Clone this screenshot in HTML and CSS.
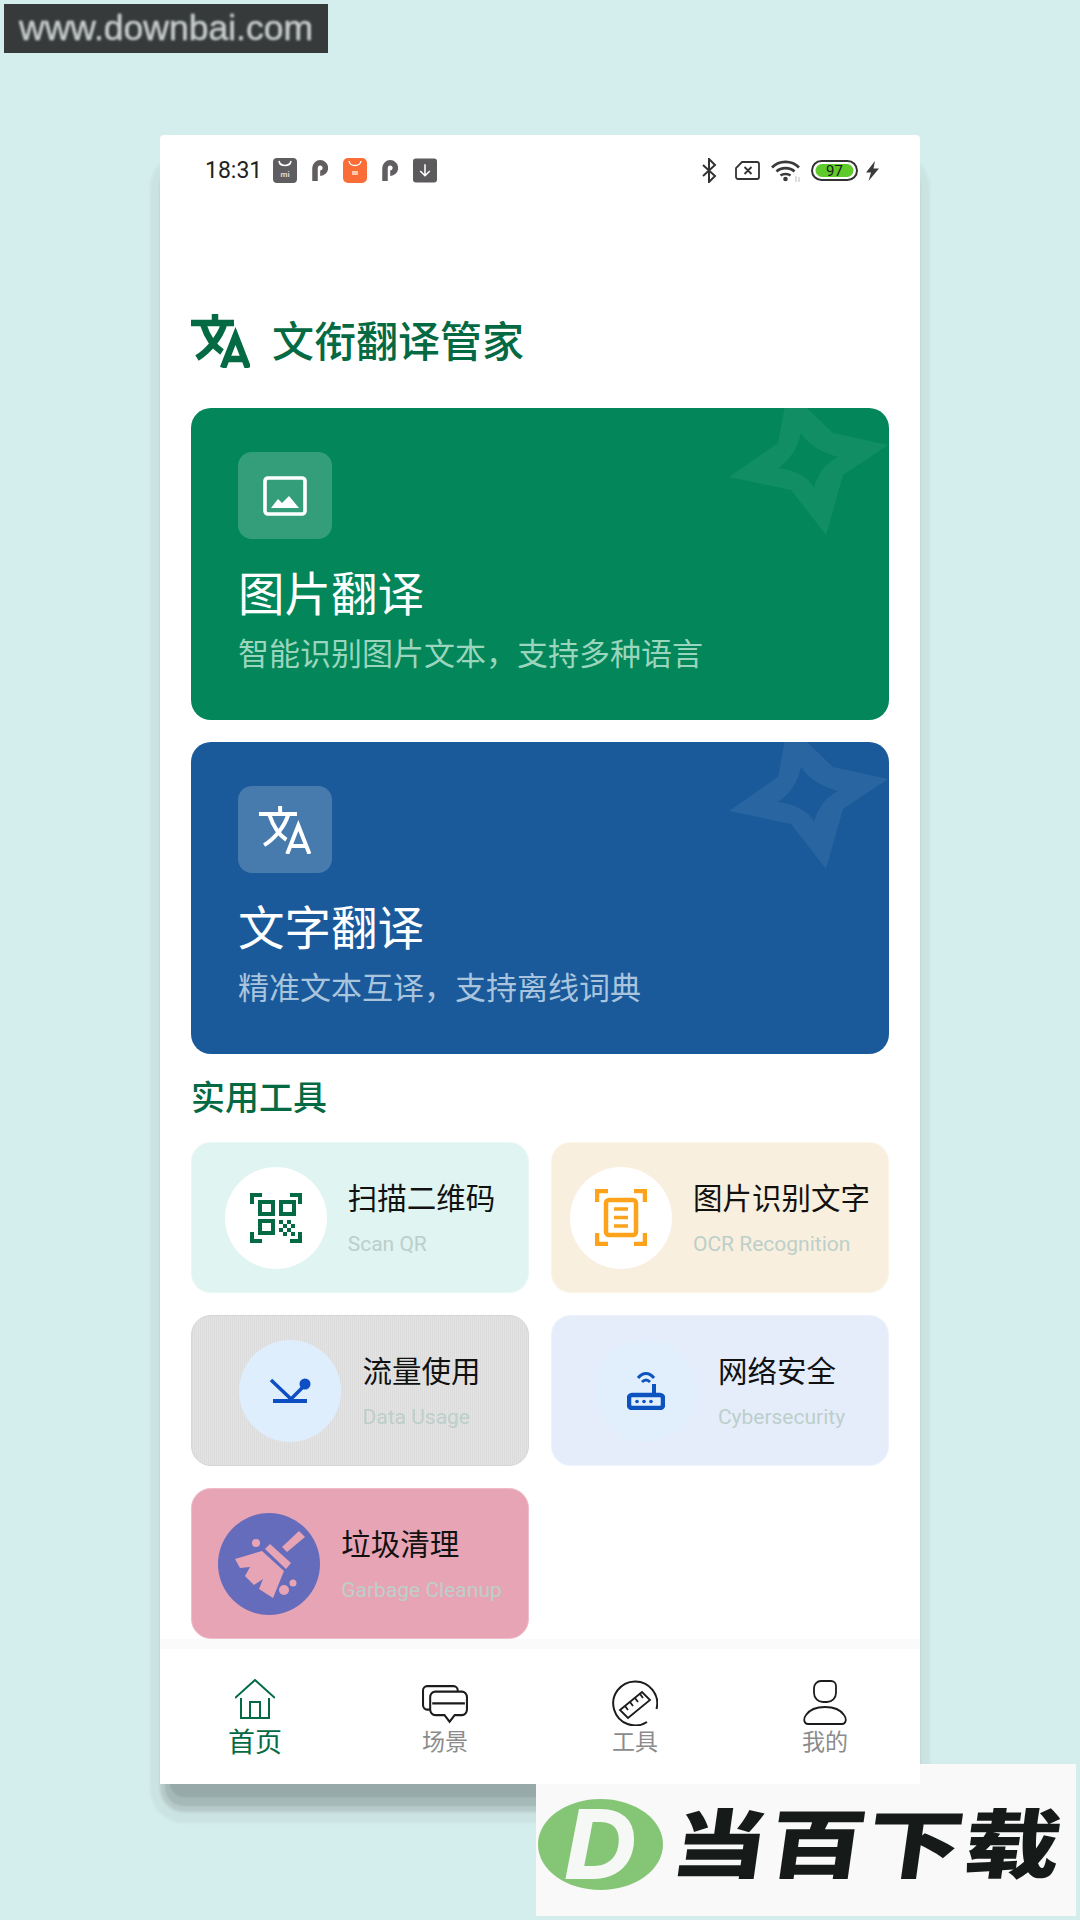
FILE: index.html
```html
<!DOCTYPE html>
<html lang="zh">
<head>
<meta charset="utf-8">
<title>文衔翻译管家</title>
<link rel="stylesheet" href="styles.css">
</head>
<body>
<div class="watermark"><span class="watermark-text">www.downbai.com</span></div>

<div class="stage">
  <div class="phone-frame">
  <main class="phone">
    <div class="status">
      <div class="status-left">
        <span class="time">18:31</span>
        <svg class="si" viewBox="0 0 24 25"><rect width="24" height="25" rx="4" fill="#5f5d5f"/><path d="M6 3c1 6 11 6 12 0" fill="none" stroke="#fff" stroke-width="1.6"/><text x="12" y="19" text-anchor="middle" class="si-mi">mi</text></svg>
        <svg class="si-p" viewBox="0 0 16 21"><path d="M3 21V8a5.2 5.2 0 1 1 5.2 5.2" fill="none" stroke="#615d60" stroke-width="5.5"/></svg>
        <svg class="si" viewBox="0 0 24 25"><rect width="24" height="25" rx="5" fill="#fb6d37"/><path d="M6 3c1 6 11 6 12 0" fill="none" stroke="#fff" stroke-width="1.4"/><rect x="9" y="13" width="6" height="4" fill="#fcc6ae"/></svg>
        <svg class="si-p" viewBox="0 0 16 21"><path d="M3 21V8a5.2 5.2 0 1 1 5.2 5.2" fill="none" stroke="#615d60" stroke-width="5.5"/></svg>
        <svg class="si" viewBox="0 0 25 25"><rect width="25" height="25" rx="3" fill="#5c5a5c"/><path d="M12.500 6v12M7.500 13l5 5 5-5" fill="none" stroke="#fff" stroke-width="1.600"/></svg>
      </div>
      <div class="status-right">
        <svg class="sr-bt" viewBox="0 0 15 25"><path d="M1 7l12 11-6 6V1l6 6L1 18" fill="none" stroke="#333" stroke-width="2"/></svg>
        <svg class="sr-sim" viewBox="0 0 25 19"><path d="M7 1H22a2 2 0 0 1 2 2V16a2 2 0 0 1-2 2H3a2 2 0 0 1-2-2V7ZM9.500 6l7 7M16.500 6l-7 7" fill="none" stroke="#333" stroke-width="1.800"/></svg>
        <svg class="sr-wifi" viewBox="0 0 29 23"><path d="M1 8.500C8 1 21 1 28 8.500M5.500 12.500C10 8 19 8 23.500 12.500M9.500 16.500c2.500-2 7.500-2 10 0" fill="none" stroke="#3a3a3a" stroke-width="2.600"/><circle cx="14.500" cy="20" r="2.300" fill="#3a3a3a"/><path d="M25 17v6M28 18v5" stroke="#bbb" stroke-width="1"/></svg>
        <svg class="sr-bat" viewBox="0 0 47 21"><rect x="1" y="1" width="45" height="19" rx="9.500" fill="#fff" stroke="#333" stroke-width="2"/><rect x="4.500" y="4" width="38" height="13" rx="6.500" fill="#5fcb2a"/><text x="23.500" y="16" text-anchor="middle" class="sr-bat-t">97</text></svg>
        <svg class="sr-bolt" viewBox="0 0 13 20"><path d="M9 0 0 11.500H5L2.500 20 13 7.500H7.500Z" fill="#3b3b3b"/></svg>
      </div>
    </div>

    <header class="app-head">
      <svg class="app-logo" viewBox="0 0 59 54"><use href="#i-translate"/></svg>
      <h1 class="app-title">文衔翻译管家</h1>
    </header>

    <section class="hero hero-green">
      <svg class="hero-star" viewBox="0 0 160 150"><path fill-rule="evenodd" d="M1 87 50 53 60 0 105 43 160 55 115 85 98 145 63 100ZM73 43Q84 60 110 67 92 76 86 98 78 82 50 78 68 66 73 43Z"/></svg>
      <div class="hero-icon">
        <svg class="ic-img" viewBox="0 0 44 40"><rect x="2" y="2" width="40" height="36" rx="3" fill="none" stroke="#fff" stroke-width="3.600"/><path d="M8 32 15 23 19 27 26 20 36 32Z" fill="#fff"/></svg>
      </div>
      <h2 class="hero-title">图片翻译</h2>
      <p class="hero-sub sub-green">智能识别图片文本，支持多种语言</p>
    </section>

    <section class="hero hero-blue">
      <svg class="hero-star" viewBox="0 0 160 150"><path fill-rule="evenodd" d="M1 87 50 53 60 0 105 43 160 55 115 85 98 145 63 100ZM73 43Q84 60 110 67 92 76 86 98 78 82 50 78 68 66 73 43Z"/></svg>
      <div class="hero-icon">
        <svg class="ic-tr" viewBox="0 0 59 54"><use href="#i-translate"/></svg>
      </div>
      <h2 class="hero-title">文字翻译</h2>
      <p class="hero-sub sub-blue">精准文本互译，支持离线词典</p>
    </section>

    <h3 class="section-title">实用工具</h3>

    <div class="tools">
      <a class="tool t-mint">
        <span class="disc disc-white">
          <svg class="ic-qr" viewBox="0 0 52 50">
            <g fill="none" stroke="#046a43" stroke-width="4"><path d="M2 11V2H12M40 2H50V11M2 39V48H12M40 48H50V39"/><rect x="10" y="9" width="13" height="12"/><rect x="31" y="9" width="13" height="12"/><rect x="10" y="28" width="13" height="12"/></g>
            <g fill="#046a43"><rect x="29" y="27" width="4" height="4"/><rect x="37" y="27" width="4" height="4"/><rect x="33" y="31" width="4" height="4"/><rect x="41" y="31" width="4" height="4"/><rect x="29" y="35" width="4" height="4"/><rect x="37" y="35" width="4" height="4"/><rect x="33" y="39" width="4" height="4"/><rect x="41" y="39" width="4" height="4"/></g>
          </svg>
        </span>
        <span class="tool-text"><b class="tool-name">扫描二维码</b><i class="tool-en">Scan QR</i></span>
      </a>
      <a class="tool t-cream">
        <span class="disc disc-white">
          <svg class="ic-ocr" viewBox="0 0 52 57">
            <g fill="none" stroke="#fca31b" stroke-width="4.500"><path d="M2 13V2H13M39 2H50V13M2 44V55H13M39 55H50V44"/><rect x="11" y="11" width="30" height="35" rx="3"/></g>
            <path d="M19 20H33M19 28.500H33M19 37H33" stroke="#fca31b" stroke-width="3.500"/>
          </svg>
        </span>
        <span class="tool-text"><b class="tool-name">图片识别文字</b><i class="tool-en">OCR Recognition</i></span>
      </a>
      <a class="tool t-grey">
        <span class="disc disc-sky">
          <svg class="ic-data" viewBox="0 0 42 26">
            <path d="M2 2 22 21 34 9" fill="none" stroke="#0d4fc2" stroke-width="3.500"/><circle cx="36" cy="6" r="5.500" fill="#0d4fc2"/><rect x="4" y="21" width="34" height="4" fill="#0d4fc2"/>
          </svg>
        </span>
        <span class="tool-text"><b class="tool-name">流量使用</b><i class="tool-en">Data Usage</i></span>
      </a>
      <a class="tool t-ice">
        <span class="disc disc-ice">
          <svg class="ic-router" viewBox="0 0 38 39">
            <path d="M11 7C16 1 22 1 27 7M15 11c2.500-2.500 5.500-2.500 8 0" fill="none" stroke="#0d53c0" stroke-width="3"/><path d="M27 13V24" stroke="#0d53c0" stroke-width="4"/><rect x="2" y="24" width="34" height="13" rx="3" fill="none" stroke="#0d53c0" stroke-width="4.500"/><circle cx="10" cy="30.500" r="1.800" fill="#0d53c0"/><circle cx="17" cy="30.500" r="1.800" fill="#0d53c0"/><circle cx="24" cy="30.500" r="1.800" fill="#0d53c0"/>
          </svg>
        </span>
        <span class="tool-text"><b class="tool-name">网络安全</b><i class="tool-en">Cybersecurity</i></span>
      </a>
      <a class="tool t-pink">
        <span class="disc disc-indigo">
          <svg class="ic-broom" viewBox="0 0 102 102">
            <g fill="#e7a4b5"><path d="M81 18 87 24 69 39 64 34Z"/><path d="M47 36 52 31 73 50 68 56Z"/><path d="M17 46 44 38 66 58 55 85 41 76 45 66 36 72 27 63 32 54 22 55Z"/><circle cx="38" cy="30" r="4"/><circle cx="66" cy="77" r="5"/><circle cx="75" cy="70" r="3.500"/></g>
          </svg>
        </span>
        <span class="tool-text"><b class="tool-name">垃圾清理</b><i class="tool-en">Garbage Cleanup</i></span>
      </a>
    </div>

    <nav class="tabbar">
      <a class="tab tab-on">
        <span class="tab-ic">
          <svg class="ic-home" viewBox="0 0 40 40"><path d="M0 19 20 1 40 19M6 19V39H34V19M15 39V23H25V39" fill="none" stroke="#046a43" stroke-width="2"/></svg>
        </span>
        <span class="tab-label">首页</span>
      </a>
      <a class="tab">
        <span class="tab-ic">
          <svg class="ic-chat" viewBox="0 0 46 35" preserveAspectRatio="none"><path d="M13 6H39a5 5 0 0 1 5 5V22a5 5 0 0 1-5 5H32L27 33 22 27H13a5 5 0 0 1-5-5V11a5 5 0 0 1 5-5ZM8 22H5a4 4 0 0 1-4-4V5a4 4 0 0 1 4-4H31a4 4 0 0 1 4 4V6M10 16.500H42" fill="none" stroke="#1c1c1c" stroke-width="2"/></svg>
        </span>
        <span class="tab-label">场景</span>
      </a>
      <a class="tab">
        <span class="tab-ic">
          <svg class="ic-tools" viewBox="0 0 46 46"><path d="M35 42A22 22 0 1 1 44.500 29" fill="none" stroke="#1c1c1c" stroke-width="2"/><path d="M8 30 30 12 38 20 16 38ZM13 26l3 4M18 22l3 4M23 18l3 4M28 14l3 4" fill="none" stroke="#1c1c1c" stroke-width="1.800"/></svg>
        </span>
        <span class="tab-label">工具</span>
      </a>
      <a class="tab">
        <span class="tab-ic">
          <svg class="ic-me" viewBox="0 0 44 46"><path d="M18 1H28a5 5 0 0 1 5 5V13a9 9 0 0 1-9 9H20a9 9 0 0 1-9-9V8a7 7 0 0 1 7-7ZM5 44H39C43 44 44 39 41 35 37 29 29 27 22 27 15 27 7 29 3 35 0 39 1 44 5 44Z" fill="none" stroke="#1c1c1c" stroke-width="1.800"/></svg>
        </span>
        <span class="tab-label">我的</span>
      </a>
    </nav>
  </main>
  </div>
</div>

<div class="brand">
  <span class="brand-mark"><span class="brand-d">D</span></span>
  <span class="brand-name">当百下载</span>
</div>

<svg class="defs" aria-hidden="true">
  <symbol id="i-translate" viewBox="0 0 59 54">
    <path d="M24 0V8M0 9H43M12 10C16 22 22 32 31 38M33 10C29 24 16 38 6 44" fill="none" stroke="currentColor" stroke-width="var(--tr-w,6.500)"/>
    <path d="M32 54 44.500 22 57 54M37 45H52" fill="none" stroke="currentColor" stroke-width="var(--tr-w,6.500)"/>
  </symbol>
</svg>
</body>
</html>
```
FILE: styles.css
```css
* { box-sizing: border-box; }
html, body { margin: 0; padding: 0; }
body {
  position: relative;
  width: 1080px;
  height: 1920px;
  overflow: hidden;
  background: #d3eeed;
  font-family: "Roboto", "Noto Sans CJK SC", sans-serif;
}
h1, h2, h3, p { margin: 0; }
i, b { font-style: normal; font-weight: 400; }
svg { display: block; flex: none; }
.defs { position: absolute; width: 0; height: 0; }

.watermark {
  position: absolute;
  left: 4px;
  top: 4px;
  width: 324px;
  height: 49px;
  background: #363a3b;
  display: flex;
  align-items: center;
  justify-content: center;
}
.watermark-text {
  font-family: "Liberation Sans", sans-serif;
  font-size: 35.500px;
  color: #c9cdcd;
  -webkit-text-stroke: 0.5px #c9cdcd;
  filter: blur(0.9px);
}

.stage { padding: 135px 0 0 160px; }
.phone-frame { position: relative; width: 760px; height: 1649px; }
.phone-frame::before {
  content: "";
  position: absolute;
  inset: 0;
  z-index: 0;
  border-radius: 24px;
  box-shadow:
    0 23px 2px -10px #97a9a8,
    0 27px 2px -5px #a5b9b7,
    0 28px 3px 0 #b6cac9,
    0 29px 3px 10px #cbe4e2;
}
.phone {
  position: relative;
  z-index: 2;
  width: 760px;
  height: 1649px;
  background: #fff;
  border-radius: 4px 4px 0 0;
  padding: 0 31px 0;
  display: flex;
  flex-direction: column;
}

.status {
  display: flex;
  justify-content: space-between;
  align-items: center;
  height: 25px;
  margin-top: 23px;
  padding: 0 10px 0 14px;
}
.status-left, .status-right { display: flex; align-items: center; }
.time { font-size: 23px; color: #222; margin-right: 11px; line-height: 25px; }
.si { width: 24px; height: 25px; }
.si-p { width: 16px; height: 21px; margin: 0 15px 0 15px; }
.si-mi { font: 700 8px "Roboto", sans-serif; fill: #ddd; }
.sr-bt { width: 15px; height: 25px; }
.sr-sim { width: 25px; height: 19px; margin-left: 18px; }
.sr-wifi { width: 29px; height: 23px; margin-left: 11px; }
.sr-bat { width: 47px; height: 21px; margin-left: 11px; }
.sr-bat-t { font: 400 15px "Roboto", sans-serif; fill: #1a1a1a; }
.sr-bolt { width: 13px; height: 20px; margin-left: 8px; }

.app-head {
  display: flex;
  align-items: center;
  margin-top: 131px;
  height: 54px;
  color: #046a43;
}
.app-logo { width: 59px; height: 54px; color: #046a43; }
.app-title {
  margin: 0 0 5px 22px;
  font: 500 42px/54px "Noto Sans CJK SC", sans-serif;
  color: #046a43;
}

.hero {
  position: relative;
  overflow: hidden;
  height: 312px;
  width: 698px;
  margin-top: 40px;
  padding: 44px 47px 0;
  border-radius: 20px;
}
.hero + .hero { margin-top: 22px; }
.hero-green { background: #02865a; }
.hero-blue { background: #1a5a9a; }
.hero-star {
  position: absolute;
  left: 537px;
  top: -18px;
  width: 160px;
  height: 150px;
  fill: #fff;
  fill-opacity: 0.065;
}
.hero-icon {
  width: 94px;
  height: 87px;
  border-radius: 14px;
  background: rgba(255, 255, 255, 0.2);
  display: flex;
  align-items: center;
  justify-content: center;
}
.ic-img { width: 44px; height: 40px; }
.ic-tr { width: 56px; height: 48px; color: #fff; --tr-w: 4.500; }
.hero-title {
  margin-top: 24px;
  font: 400 46.500px/56px "Noto Sans CJK SC", sans-serif;
  color: #fff;
}
.hero-sub {
  margin-top: 13px;
  font: 400 31px/40px "Noto Sans CJK SC", sans-serif;
}
.sub-green { color: #9ad5bd; }
.sub-blue { color: #a9c4dd; }

.section-title {
  margin-top: 21px;
  height: 42px;
  font: 500 34px/42px "Noto Sans CJK SC", sans-serif;
  color: #046a43;
}

.tools {
  display: grid;
  grid-template-columns: 338px 338px;
  grid-auto-rows: 151px;
  gap: 22px;
  margin-top: 25px;
}
.tool {
  display: flex;
  align-items: center;
  justify-content: center;
  gap: 21px;
  border-radius: 20px;
  border: 1px solid rgba(255, 255, 255, 0.3);
}
.t-mint { background: #e0f4f1; }
.t-cream { background: #f9efde; }
.t-grey { background: repeating-linear-gradient(90deg, #dcdcdc 0 1px, #e3e3e3 1px 2px); border-color: #d6d6d6; }
.t-ice { background: #e5edfb; }
.t-pink { background: #e7a4b5; border-color: #efbccb; }
.disc {
  width: 102px;
  height: 102px;
  border-radius: 50%;
  display: flex;
  align-items: center;
  justify-content: center;
  flex: none;
}
.disc-white { background: #fff; }
.disc-sky { background: #deeefd; }
.disc-ice { background: #e1eefc; }
.disc-indigo { background: #646cbb; }
.ic-qr { width: 52px; height: 50px; }
.ic-ocr { width: 52px; height: 57px; }
.ic-data { width: 42px; height: 26px; }
.ic-router { width: 38px; height: 39px; }
.ic-broom { width: 102px; height: 102px; }
.tool-text { display: flex; flex-direction: column; }
.tool-name {
  font: 400 29.500px/40px "Noto Sans CJK SC", sans-serif;
  color: #111;
  white-space: nowrap;
}
.tool-en {
  margin-top: 12.500px;
  font: 400 21px/30px "Roboto", sans-serif;
  color: #bccfca;
  white-space: nowrap;
}

.tabbar {
  display: grid;
  grid-template-columns: repeat(4, 190px);
  margin: 10px -31px 0;
  height: 134px;
  box-shadow: 0 -10px 0 #fafafa;
  background: #fff;
}
.tab {
  display: flex;
  flex-direction: column;
  align-items: center;
  padding-top: 30px;
}
.tab-ic { height: 47px; display: flex; align-items: flex-start; }
.ic-home { width: 40px; height: 40px; }
.ic-chat { width: 47px; height: 39px; margin-top: 6px; }
.ic-tools { width: 46px; height: 46px; margin-top: 1px; }
.ic-me { width: 44px; height: 46px; margin-top: 1px; }
.tab-label {
  margin-top: 1px;
  font: 400 23px/26px "Noto Sans CJK SC", sans-serif;
  color: #8b8b8b;
}
.tab-on .tab-label { font-size: 27px; color: #046a43; margin-top: 2px; }

.brand {
  position: absolute;
  z-index: 1;
  left: 536px;
  top: 1764px;
  width: 540px;
  height: 152px;
  background: #f8f9f8;
  display: flex;
  align-items: flex-start;
}
.brand-mark {
  width: 125px;
  height: 91px;
  margin: 35px 0 0 2px;
  border-radius: 50%;
  background: #85c676;
  display: flex;
  align-items: center;
  justify-content: center;
}
.brand-d {
  font: italic 700 98px/91px "Liberation Sans", sans-serif;
  color: #f6f8f5;
  -webkit-text-stroke: 2px #f6f8f5;
}
.brand-name {
  margin: 28px 0 0 10px;
  font: 900 96px/96px "Noto Sans CJK SC", sans-serif;
  letter-spacing: 1.500px;
  color: #161a18;
  white-space: nowrap;
  transform: skewX(-8deg) scaleY(0.78);
}
```
